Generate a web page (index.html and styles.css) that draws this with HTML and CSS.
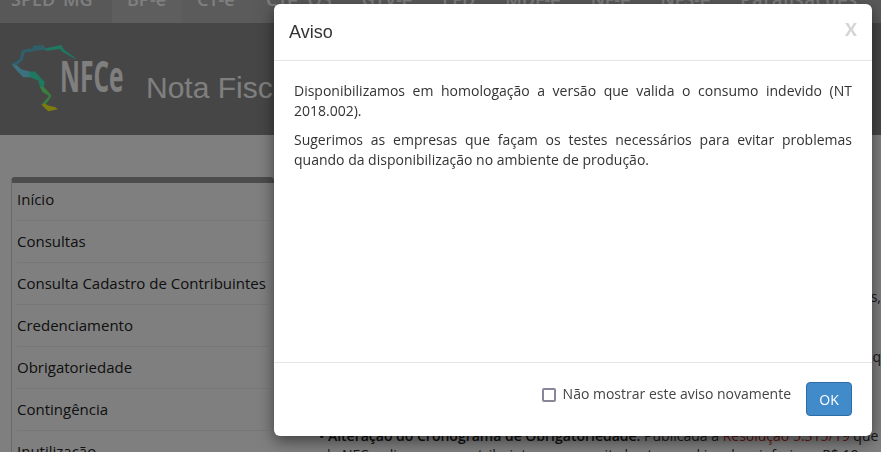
FILE: index.html
```html
<!DOCTYPE html>
<html lang="pt-BR">
<head>
<meta charset="utf-8">
<title>NFC-e</title>
<link rel="stylesheet" href="styles.css">
</head>
<body>
<div class="page">
  <nav class="topnav">
    <a class="tab tab-first">SPED MG</a>
    <a class="tab tab-a">BP-e</a>
    <a class="tab tab-b">CT-e</a>
    <a class="tab tab-wide">CTe OS</a>
    <a class="tab">GTV-e</a>
    <a class="tab">EFD</a>
    <a class="tab">MDF-e</a>
    <a class="tab">NF-e</a>
    <a class="tab">NFS-e</a>
    <a class="tab tab-last">Paralisações</a>
  </nav>
  <header class="banner">
    <svg class="map" width="68" height="72" viewBox="30 20 205 215">
      <path class="m-top" d="M35 85 L60 70 L65 45 L90 38 L97 42 L100 30 L130 28 L138 38 L140 45 L130 42 L105 45 L95 48 L75 50 L68 75 L50 88 Z"/>
      <path class="m-top2" d="M138 38 L185 28 L193 42 L228 68 L228 71 L190 50 L180 40 L140 45 Z"/>
      <path class="m-blue" d="M35 85 L50 105 L70 125 L90 125 L90 108 L65 102 L50 88 Z"/>
      <path class="m-green" d="M88 108 L105 108 L135 140 L132 155 L120 155 L115 135 L90 125 Z"/>
      <path class="m-green2" d="M120 155 L132 155 L155 180 L150 190 L135 210 L125 208 L148 182 L128 170 Z"/>
      <path class="m-olive" d="M125 208 L135 205 L150 212 L165 215 L175 222 L145 228 Z"/>
    </svg>
    <span class="logo-text">NFCe</span>
    <h1 class="site-title">Nota Fiscal de Consumidor Eletrônica</h1>
  </header>
  <main class="content">
    <ul class="sidemenu">
      <li>Início</li>
      <li>Consultas</li>
      <li>Consulta Cadastro de Contribuintes</li>
      <li>Credenciamento</li>
      <li>Obrigatoriedade</li>
      <li>Contingência</li>
      <li>Inutilização</li>
    </ul>
    <article class="news">
      <p class="line-s">documentos fiscais eletrônicos emitidos,</p>
      <p class="line-q">empresas que utilizam o sistema de q</p>
      <p class="line-a"><b>• Alteração do Cronograma de Obrigatoriedade:</b> Publicada a <span class="red">Resolução 5.315/19</span> que</p>
      <p class="line-b">de NFC-e diz que os contribuintes com receita bruta anual igual ou inferior a R$ 10</p>
    </article>
  </main>
</div>
<div class="backdrop"></div>
<div class="modal">
  <div class="modal-head">
    <h2>Aviso</h2>
    <span class="close">X</span>
  </div>
  <div class="modal-body">
    <p>Disponibilizamos em homologação a versão que valida o consumo indevido (NT 2018.002).</p>
    <p>Sugerimos as empresas que façam os testes necessários para evitar problemas quando da disponibilização no ambiente de produção.</p>
  </div>
  <div class="modal-foot">
    <label class="check"><span class="box"></span>Não mostrar este aviso novamente</label>
    <button class="ok">OK</button>
  </div>
</div>
</body>
</html>
```
FILE: styles.css
```css
* { box-sizing: border-box; }
html, body { margin: 0; height: 100%; overflow: hidden; }
body { font-family: "Open Sans", sans-serif; font-size: 15px; color: #333; background: #fff; }
.page { height: 452px; overflow: hidden; }

.topnav { display: flex; height: 23px; background: #b5b5b5; overflow: hidden; }
.tab { padding: 0 15px; height: 33px; margin-top: -10px; font-size: 18px; font-weight: 600; line-height: 18px; color: #fff; white-space: nowrap; }
.tab-first { padding: 0 15px 0 11px; width: 112px; word-spacing: 3px; background: #b0b0b0; }
.tab-a { background: #bdbdbd; width: 70px; }
.tab-b { background: #b7b7b7; width: 69px; }
.tab-wide { word-spacing: 5px; }
.tab-last { letter-spacing: .8px; }

.banner { display: flex; align-items: flex-start; height: 112px; background: #8c8c8c; }
.map { flex: none; margin: 19px -18px 0 10px; }
.m-top { fill: #5cc0d8; }
.m-top2 { fill: #3ef0c0; }
.m-blue { fill: #78e4ff; }
.m-green { fill: #3ef0c0; }
.m-green2 { fill: #74ff80; }
.m-olive { fill: #f8f820; }
.logo-text { flex: none; width: 86px; margin-top: 29px; font-weight: 700; font-size: 43px; line-height: 48px; color: #fff; transform: scaleX(.57); transform-origin: left center; }
.site-title { margin: 47px 0 0; font-family: "Liberation Sans", sans-serif; font-weight: 400; font-size: 30px; line-height: 36px; color: #fff; white-space: nowrap; }

.content { display: flex; gap: 45px; padding: 42px 0 0 11px; align-items: flex-start; }
.sidemenu { list-style: none; margin: 0; padding: 0 6px 0 5px; width: 263px; flex: none; border-left: 1px solid #d5d5d5; border-top: 6px solid #999; border-radius: 4px 4px 0 0; }
.sidemenu li { height: 42px; line-height: 41px; border-bottom: 1px solid #eee; color: #222; white-space: nowrap; }
.sidemenu li:first-child { height: 38px; line-height: 32px; }

.news { flex: none; width: 562px; padding-top: 110px; font-size: 14px; }
.news p { margin: 0; line-height: 20px; white-space: nowrap; color: #333; }
.line-s, .line-q { text-align: right; }
.news .line-q { margin-top: 40px; }
.news .line-a { margin-top: 59px; }
.news .line-b { margin-top: -1px; padding-left: 3px; }
.line-a b { color: #222; font-weight: 600; }
.red { color: #c9302c; }

.backdrop { position: fixed; inset: 0; background: rgba(0,0,0,.5); }
.modal { position: absolute; left: 274px; top: 4px; width: 598px; height: 432px; background: #fff; border-radius: 6px; box-shadow: 0 5px 15px rgba(0,0,0,.5); display: flex; flex-direction: column; }
.modal-head { height: 57px; flex: none; border-bottom: 1px solid #e5e5e5; padding: 16px 15px 0; display: flex; justify-content: space-between; align-items: flex-start; }
.modal-head h2 { margin: 0; font-family: "Liberation Sans", sans-serif; font-weight: 400; font-size: 18px; line-height: 24px; color: #333; }
.close { margin-top: -1px; font-weight: 700; font-size: 18px; line-height: 21px; color: #d5d5d5; }
.modal-body { flex: 1; padding: 20px; border-bottom: 1px solid #e5e5e5; }
.modal-body p { margin: 0 0 9px; font-size: 14px; line-height: 20px; text-align: justify; color: #333; }
.modal-foot { height: 73px; flex: none; padding: 19px 20px 0; display: flex; justify-content: flex-end; }
.check { display: flex; align-items: center; height: 34px; margin: -6px 15px 0 0; font-size: 14px; color: #444; }
.box { width: 14px; height: 14px; margin: 4px 7px 0 0; border: 2px solid #8a8598; border-radius: 2px; }
.ok { width: 46px; height: 34px; padding: 0; border: 1px solid #2e6da4; border-radius: 4px; background: #428bca; color: #fff; font-family: "Open Sans", sans-serif; font-size: 14px; }
```
